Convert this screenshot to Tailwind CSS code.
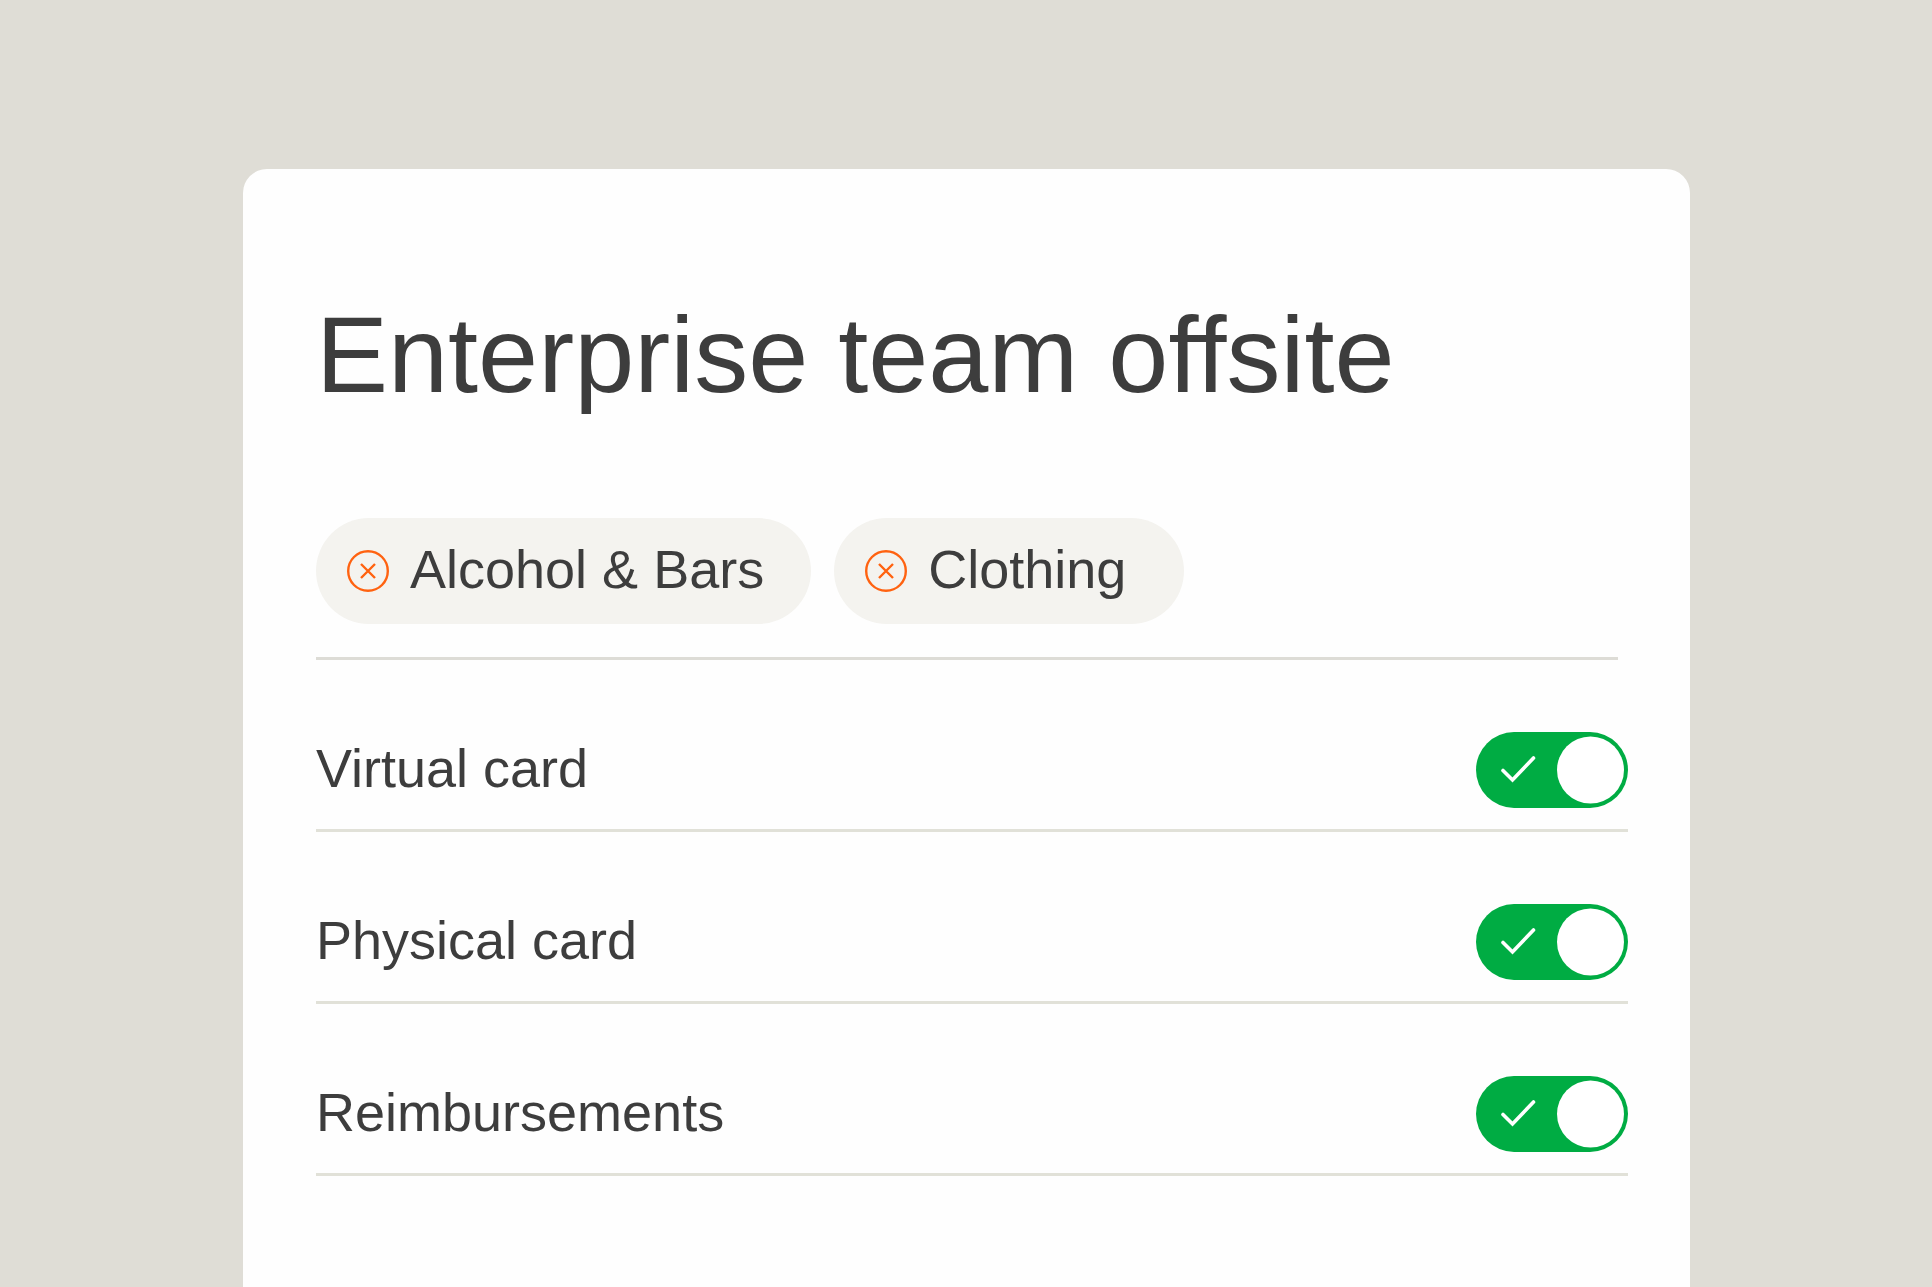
<!DOCTYPE html>
<html lang="en">
<head>
    <meta charset="UTF-8">
    <meta name="viewport" content="width=device-width, initial-scale=1.0">
    <title>Enterprise team offsite</title>
    <script src="https://cdn.jsdelivr.net/npm/@tailwindcss/browser@4"></script>
</head>
<body class="min-h-screen flex flex-col bg-[#dfddd6] pt-[169px] pl-[243px] pr-[242px] font-['Liberation_Sans',Arial,sans-serif] text-[#3d3d3d]">
    <main class="flex-1 bg-[#fefefe] rounded-t-3xl pt-[132px] pl-[73px] pr-[62px] pb-20">
        <h1 class="text-[108px] leading-[108px]">Enterprise team offsite</h1>

        <!-- Blocked categories -->
        <ul class="mt-[109px] mr-[10px] pb-[33px] flex gap-[23px] border-b-3 border-[#dddcd6]">
            <li class="h-[106px] pl-[31px] pr-[47px] flex items-center gap-[21px] rounded-full bg-[#f4f3ef]">
                <button type="button" aria-label="Remove Alcohol &amp; Bars">
                    <svg class="block size-[42px] text-[#ff6210]" viewBox="0 0 42 42" fill="none" stroke="currentColor" stroke-width="2.4">
                        <circle cx="21" cy="21" r="19.8"></circle>
                        <path d="M14 14L28 28M28 14L14 28"></path>
                    </svg>
                </button>
                <span class="pb-1 text-[54px] leading-[60px] whitespace-nowrap">Alcohol &amp; Bars</span>
            </li>
            <li class="h-[106px] min-w-[350px] pl-[31px] pr-[47px] flex items-center gap-[21px] rounded-full bg-[#f4f3ef]">
                <button type="button" aria-label="Remove Clothing">
                    <svg class="block size-[42px] text-[#ff6210]" viewBox="0 0 42 42" fill="none" stroke="currentColor" stroke-width="2.4">
                        <circle cx="21" cy="21" r="19.8"></circle>
                        <path d="M14 14L28 28M28 14L14 28"></path>
                    </svg>
                </button>
                <span class="pb-1 text-[54px] leading-[60px] whitespace-nowrap">Clothing</span>
            </li>
        </ul>

        <!-- Payment methods -->
        <div class="pt-[72px] pb-[21px] flex items-center justify-between border-b-3 border-[#e1e1d8]">
            <label for="virtual" class="pb-1 text-[54px] leading-[60px]">Virtual card</label>
            <div class="relative w-[152px] h-[76px]">
                <input id="virtual" type="checkbox" role="switch" checked class="peer block size-full appearance-none rounded-full bg-gray-300 checked:bg-[#00ac43]">
                <svg class="absolute inset-0 size-full pointer-events-none hidden peer-checked:block" viewBox="0 0 152 76" fill="none">
                    <path d="M27 38.5L36.5 48L57.5 26" stroke="#fff" stroke-width="3.6" stroke-linecap="round"></path>
                    <circle cx="114.5" cy="38" r="33.5" fill="#fff"></circle>
                </svg>
            </div>
        </div>
        <div class="pt-[72px] pb-[21px] flex items-center justify-between border-b-3 border-[#e1e1d8]">
            <label for="physical" class="pb-1 text-[54px] leading-[60px]">Physical card</label>
            <div class="relative w-[152px] h-[76px]">
                <input id="physical" type="checkbox" role="switch" checked class="peer block size-full appearance-none rounded-full bg-gray-300 checked:bg-[#00ac43]">
                <svg class="absolute inset-0 size-full pointer-events-none hidden peer-checked:block" viewBox="0 0 152 76" fill="none">
                    <path d="M27 38.5L36.5 48L57.5 26" stroke="#fff" stroke-width="3.6" stroke-linecap="round"></path>
                    <circle cx="114.5" cy="38" r="33.5" fill="#fff"></circle>
                </svg>
            </div>
        </div>
        <div class="pt-[72px] pb-[21px] flex items-center justify-between border-b-3 border-[#e1e1d8]">
            <label for="reimbursements" class="pb-1 text-[54px] leading-[60px]">Reimbursements</label>
            <div class="relative w-[152px] h-[76px]">
                <input id="reimbursements" type="checkbox" role="switch" checked class="peer block size-full appearance-none rounded-full bg-gray-300 checked:bg-[#00ac43]">
                <svg class="absolute inset-0 size-full pointer-events-none hidden peer-checked:block" viewBox="0 0 152 76" fill="none">
                    <path d="M27 38.5L36.5 48L57.5 26" stroke="#fff" stroke-width="3.6" stroke-linecap="round"></path>
                    <circle cx="114.5" cy="38" r="33.5" fill="#fff"></circle>
                </svg>
            </div>
        </div>
    </main>
</body>
</html>
